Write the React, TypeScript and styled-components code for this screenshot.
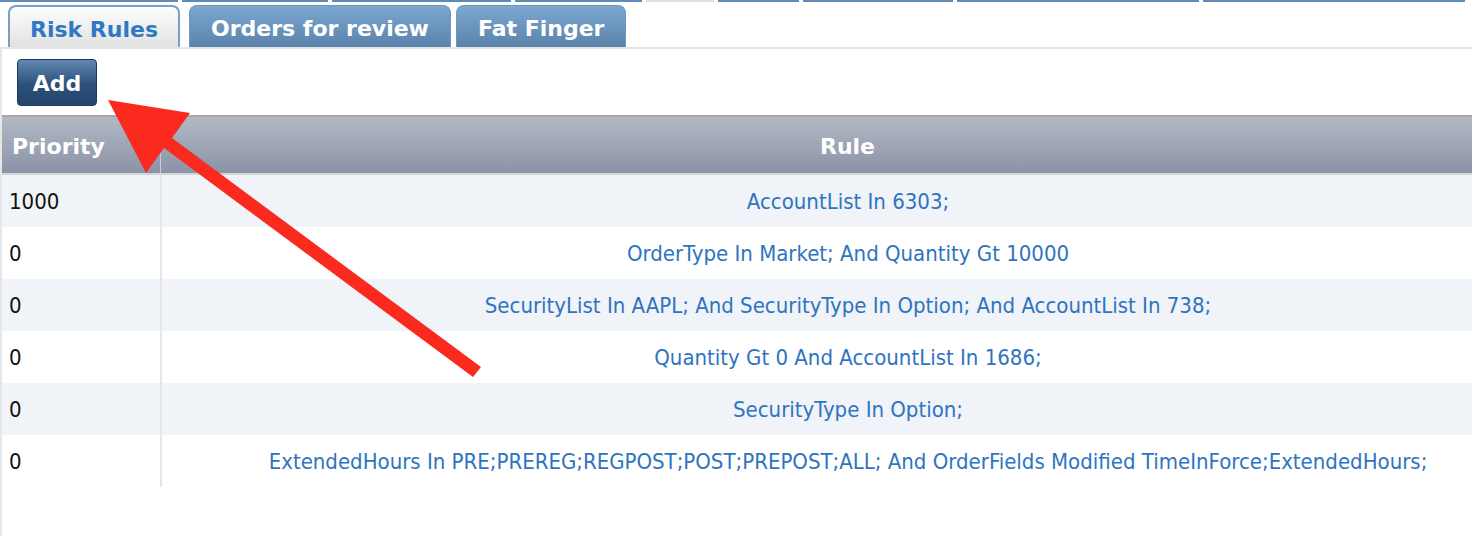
import React from "react";
import styled, { createGlobalStyle } from "styled-components";

const GlobalStyle = createGlobalStyle`
  html, body {
    margin: 0;
    padding: 0;
    background: #fff;
    overflow: hidden;
  }
  body {
    font-family: "DejaVu Sans Condensed", "DejaVu Sans", Verdana, sans-serif;
  }
`;

const boldFont = `"DejaVu Sans", Verdana, sans-serif`;

const Page = styled.div`
  position: relative;
  width: 1472px;
  height: 536px;
  overflow: hidden;
`;

const TopStrip = styled.div`
  display: flex;
  gap: 4px;
  height: 3px;
`;

const StripPiece = styled.div<{ w: number; muted?: boolean }>`
  width: ${({ w }) => w}px;
  height: 2px;
  background: ${({ muted }) => (muted ? "#e2e2e2" : "#5f8bb6")};
`;

const TabBar = styled.div`
  display: flex;
  align-items: flex-end;
  gap: 5px;
  padding: 2px 0 0 8px;
  height: 42px;
  border-bottom: 2px solid #e6e6e6;
`;

const Tab = styled.div<{ active?: boolean }>`
  box-sizing: border-box;
  height: 42px;
  padding: 4px ${({ active }) => (active ? 20 : 21)}px 0;
  margin-right: ${({ active }) => (active ? 4 : 0)}px;
  display: flex;
  align-items: center;
  border-radius: 8px 8px 0 0;
  font-family: ${boldFont};
  font-weight: bold;
  font-size: 22px;
  border: ${({ active }) => (active ? "2px solid #76a0c9" : "1px solid #6e97bf")};
  border-bottom: none;
  color: ${({ active }) => (active ? "#2f78c4" : "#fff")};
  background: ${({ active }) =>
    active
      ? "linear-gradient(#fdfdfd, #e2e2e2)"
      : "linear-gradient(#7ba7d0, #5b83ab)"};
`;

const Content = styled.div`
  border-left: 2px solid #e6e6e6;
  height: 487px;
`;

const Toolbar = styled.div`
  height: 66px;
  padding: 10px 0 0 15px;
  box-sizing: border-box;
`;

const AddButton = styled.button`
  display: block;
  box-sizing: border-box;
  width: 80px;
  height: 47px;
  padding: 2px 0 0;
  border: 1px solid #1e3b5e;
  border-radius: 4px;
  background: linear-gradient(#6088b1, #2c4f78 55%, #25466d);
  color: #fff;
  font-family: ${boldFont};
  font-weight: bold;
  font-size: 22px;
  cursor: pointer;
`;

const Table = styled.div`
  width: 1532px;
  display: grid;
  grid-template-columns: 158px 1fr;
`;

const HeadCell = styled.div<{ center?: boolean }>`
  box-sizing: border-box;
  height: 60px;
  display: flex;
  align-items: center;
  justify-content: ${({ center }) => (center ? "center" : "flex-start")};
  padding: 3px 0 0 ${({ center }) => (center ? 0 : 10)}px;
  border-top: 2px solid #a7a7a7;
  border-bottom: 2px solid #d2d4d8;
  border-left: ${({ center }) => (center ? "1px solid #c8cdd6" : "none")};
  background: linear-gradient(#b2b8c5, #8a93a7);
  color: #fff;
  font-family: ${boldFont};
  font-weight: bold;
  font-size: 22px;
`;

const Cell = styled.div<{ odd: boolean; rule?: boolean }>`
  height: 52px;
  display: flex;
  align-items: center;
  justify-content: ${({ rule }) => (rule ? "center" : "flex-start")};
  padding-left: ${({ rule }) => (rule ? 0 : 7)}px;
  border-left: ${({ rule }) => (rule ? "2px solid #e4e6ea" : "none")};
  background: ${({ odd }) => (odd ? "#f0f3f8" : "#fff")};
  color: ${({ rule }) => (rule ? "#2f74c0" : "#111")};
  font-size: 22px;
  white-space: nowrap;
`;

const Overlay = styled.svg`
  position: absolute;
  left: 0;
  top: 0;
  pointer-events: none;
`;

const strip = [
  { w: 178 }, { w: 146 }, { w: 179 }, { w: 127 }, { w: 68, muted: true },
  { w: 81 }, { w: 150 }, { w: 242 }, { w: 262 },
];

const rows = [
  { priority: "1000", rule: "AccountList In 6303;" },
  { priority: "0", rule: "OrderType In Market; And Quantity Gt 10000" },
  { priority: "0", rule: "SecurityList In AAPL; And SecurityType In Option; And AccountList In 738;" },
  { priority: "0", rule: "Quantity Gt 0 And AccountList In 1686;" },
  { priority: "0", rule: "SecurityType In Option;" },
  {
    priority: "0",
    rule: "ExtendedHours In PRE;PREREG;REGPOST;POST;PREPOST;ALL; And OrderFields Modified TimeInForce;ExtendedHours;",
  },
];

const App: React.FC = () => {
  return (
    <Page>
      <GlobalStyle />
      <TopStrip>
        {strip.map((s, i) => (
          <StripPiece key={i} w={s.w} muted={s.muted} />
        ))}
      </TopStrip>
      <TabBar>
        <Tab active>Risk Rules</Tab>
        <Tab>Orders for review</Tab>
        <Tab>Fat Finger</Tab>
      </TabBar>
      <Content>
        <Toolbar>
          <AddButton>Add</AddButton>
        </Toolbar>
        <Table>
          <HeadCell>Priority</HeadCell>
          <HeadCell center>Rule</HeadCell>
          {rows.map((r, idx) => (
            <React.Fragment key={idx}>
              <Cell odd={idx % 2 === 0}>{r.priority}</Cell>
              <Cell odd={idx % 2 === 0} rule>
                {r.rule}
              </Cell>
            </React.Fragment>
          ))}
        </Table>
      </Content>
      <Overlay width="1472" height="536" viewBox="0 0 1472 536">
        <polygon
          points="108,100 190,113 172,138 481,367 473,377 164,148 146,173"
          fill="#fb2a1e"
        />
      </Overlay>
    </Page>
  );
};

export default App;
